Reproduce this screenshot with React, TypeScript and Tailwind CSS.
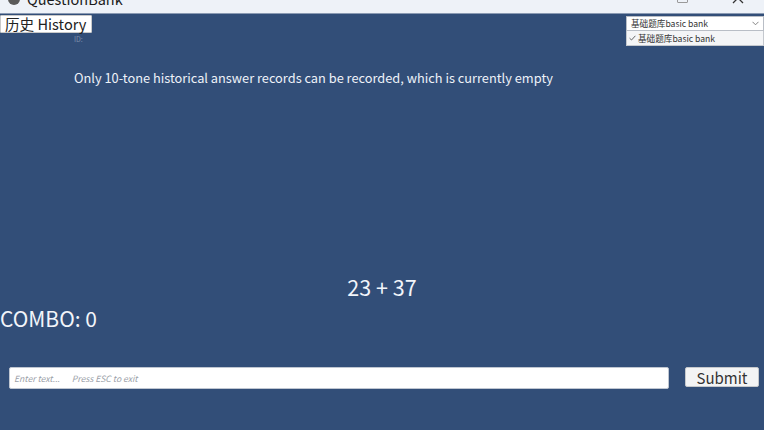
import React from "react";

export default function App() {
  return (
    <div
      className="w-[764px] h-[430px] overflow-hidden bg-[#324e78] flex flex-col"
      style={{ fontFamily: '"Noto Sans CJK SC", "Noto Sans", sans-serif' }}
    >
      {/* title bar (cut off at top) */}
      <div className="h-[14px] shrink-0 bg-[#eef2f8] border-b border-[#8a9ab3] flex items-start overflow-hidden">
        <div className="flex items-center gap-[7px] pl-[8px] -mt-[10px]">
          <div className="w-[12px] h-[12px] rounded-full bg-[#5a5a5a]" />
          <span className="text-[14.5px] leading-[18px] text-[#1a1a1a]">QuestionBank</span>
        </div>
        <div className="ml-auto flex items-start gap-[44px] pr-[20px]">
          <div className="w-[11px] h-[10px] border border-[#9a9a9a] rounded-[1px] -mt-[7px]" />
          <svg width="12" height="12" viewBox="0 0 12 12" className="-mt-[8px]">
            <path d="M1 1 L11 11 M11 1 L1 11" stroke="#333" strokeWidth="1.3" />
          </svg>
        </div>
      </div>

      {/* top row */}
      <div className="flex items-start justify-between h-[34px] shrink-0">
        <div className="flex flex-col">
          <div className="mt-[1px] w-[92px] h-[18px] bg-white border border-[#c9c9c9] rounded-[1px] flex items-center pl-[4px] text-[14.6px] leading-[14px] text-[#222]">
            历史 History
          </div>
          <div className="pl-[74px] mt-[1px] text-[7px] leading-[10px] text-[#7d8fab]">ID:</div>
        </div>
        <div className="flex flex-col w-[138px] mt-[2px]">
          <div className="h-[15px] bg-white border border-[#b9bec6] flex items-center pl-[4px] pr-[4px] text-[8.6px] text-[#333]">
            <span>基础题库basic bank</span>
            <svg width="7" height="5" viewBox="0 0 7 5" className="ml-auto">
              <path d="M0.5 0.8 L3.5 3.8 L6.5 0.8" stroke="#777" strokeWidth="0.9" fill="none" />
            </svg>
          </div>
          <div className="h-[15px] bg-[#f4f5f7] border border-[#c4c8ce] border-t-0 flex items-center pl-[2px] text-[8.6px] text-[#333] gap-[2px]">
            <svg width="7" height="6" viewBox="0 0 7 6">
              <path d="M0.6 3.2 L2.5 5 L6.4 0.8" stroke="#555" strokeWidth="0.9" fill="none" />
            </svg>
            <span>基础题库basic bank</span>
          </div>
        </div>
      </div>

      {/* message */}
      <div className="pl-[74px] mt-[21px] text-[12.8px] leading-[18px] text-[#eef2f8]">
        Only 10-tone historical answer records can be recorded, which is currently empty
      </div>

      {/* question */}
      <div className="mt-[187px] text-center text-[21.5px] leading-[26px] text-[#f2f5fa]">23 + 37</div>

      {/* combo */}
      <div className="mt-[5px] text-[21px] leading-[26px] text-[#f2f5fa]">COMBO: 0</div>

      {/* input row */}
      <div className="mt-[36px] flex items-start pl-[9px] pr-[5px]">
        <div className="w-[660px] h-[22px] bg-white border border-[#bfc6d1] rounded-[2px] flex items-center pl-[4px] text-[8.6px] italic text-[#9aa0a8]">
          <span>Enter text...</span>
          <span className="ml-[12px]">Press ESC to exit</span>
        </div>
        <div className="ml-[16px] w-[74px] h-[20px] bg-[#f3f4f5] border border-[#c5c8cc] rounded-[2px] flex items-center justify-center text-[15px] leading-[15px] text-[#333]">
          Submit
        </div>
      </div>
    </div>
  );
}
